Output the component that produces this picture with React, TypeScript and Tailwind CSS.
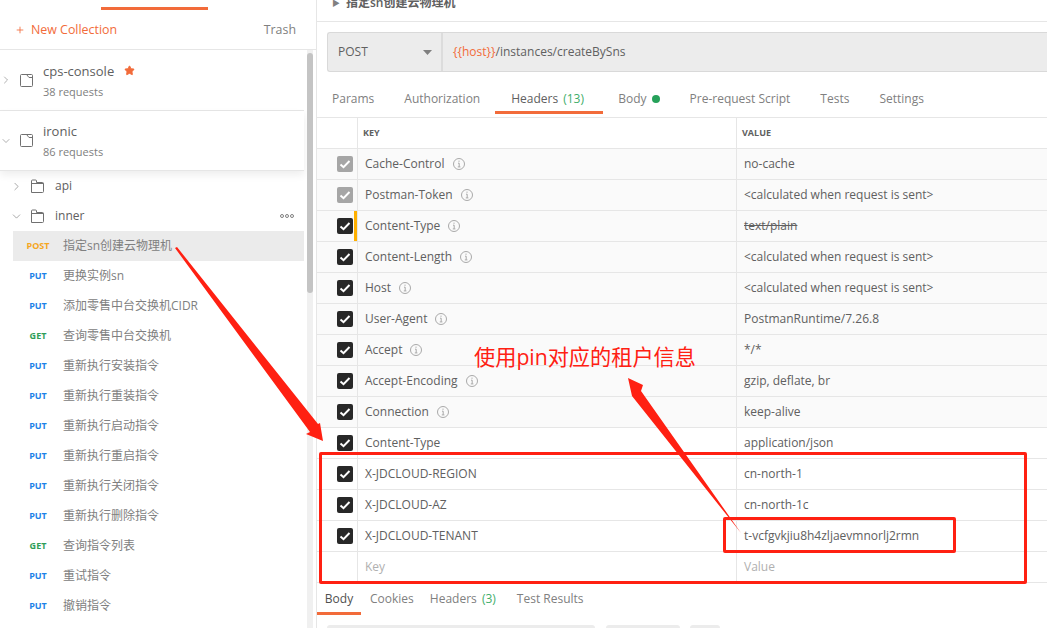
import { ChevronDown, ChevronRight, Plus, Star } from 'lucide-react'

const requests = [
  { method: 'POST', name: '指定sn创建云物理机', active: true },
  { method: 'PUT', name: '更换实例sn' },
  { method: 'PUT', name: '添加零售中台交换机CIDR' },
  { method: 'GET', name: '查询零售中台交换机' },
  { method: 'PUT', name: '重新执行安装指令' },
  { method: 'PUT', name: '重新执行重装指令' },
  { method: 'PUT', name: '重新执行启动指令' },
  { method: 'PUT', name: '重新执行重启指令' },
  { method: 'PUT', name: '重新执行关闭指令' },
  { method: 'PUT', name: '重新执行删除指令' },
  { method: 'GET', name: '查询指令列表' },
  { method: 'PUT', name: '重试指令' },
  { method: 'PUT', name: '撤销指令' },
]

const headers = [
  { key: 'Cache-Control', value: 'no-cache', info: true, auto: true },
  { key: 'Postman-Token', value: '<calculated when request is sent>', info: true, auto: true },
  { key: 'Content-Type', value: 'text/plain', info: true, struck: true, warn: true },
  { key: 'Content-Length', value: '<calculated when request is sent>', info: true },
  { key: 'Host', value: '<calculated when request is sent>', info: true },
  { key: 'User-Agent', value: 'PostmanRuntime/7.26.8', info: true },
  { key: 'Accept', value: '*/*', info: true },
  { key: 'Accept-Encoding', value: 'gzip, deflate, br', info: true },
  { key: 'Connection', value: 'keep-alive', info: true },
  { key: 'Content-Type', value: 'application/json', plain: true },
  { key: 'X-JDCLOUD-REGION', value: 'cn-north-1', plain: true },
  { key: 'X-JDCLOUD-AZ', value: 'cn-north-1c', plain: true },
  { key: 'X-JDCLOUD-TENANT', value: 't-vcfgvkjiu8h4zljaevmnorlj2rmn', plain: true },
]

function CollectionIcon() {
  return (
    <svg width="15" height="15" viewBox="0 0 15 15" fill="none" stroke="#707070" strokeWidth="1" className="shrink-0">
      <path d="M1.5 2.5 Q1.5 1.5 2.5 1.5 H12.5 Q13.5 1.5 13.5 2.5 V12.5 Q13.5 13.5 12.5 13.5 H2.5 Q1.5 13.5 1.5 12.5 Z" />
      <path d="M7.5 1.5 L10 4.5 H13.5" />
    </svg>
  )
}

function FolderIcon() {
  return (
    <svg width="15" height="15" viewBox="0 0 15 15" fill="none" stroke="#707070" strokeWidth="1" className="shrink-0">
      <path d="M1.5 13.5 V2 Q1.5 1 2.5 1 H5.5 Q6.5 1 6.5 2 V3.5 H12.5 Q13.5 3.5 13.5 4.5 V12.5 Q13.5 13.5 12.5 13.5 Z" />
      <path d="M1.5 4.5 H13.5" />
    </svg>
  )
}

function InfoIcon() {
  return (
    <svg width="12" height="12" viewBox="0 0 12 12" fill="none" className="ml-[8px] shrink-0">
      <circle cx="6" cy="6" r="5.5" stroke="#a9a9a9" />
      <path d="M6 2.6 V3.8 M5 5.2 H6.2 V8.8 M4.8 8.9 H7.4" stroke="#a9a9a9" />
    </svg>
  )
}

function CheckBox({ auto }: { auto?: boolean }) {
  return (
    <div className={`flex h-4 w-4 items-center justify-center rounded-[2px] ${auto ? 'bg-[#a6a6a6]' : 'bg-[#282828]'}`}>
      <svg width="12" height="12" viewBox="0 0 12 12" fill="none" stroke="#fff" strokeWidth="2">
        <path d="M1.5 6.5 L4.5 9.2 L10.5 3" />
      </svg>
    </div>
  )
}

function Collection({ name, count, open, starred }: { name: string; count: string; open?: boolean; starred?: boolean }) {
  return (
    <div className={`flex items-center border-b border-[#e6e6e6] ${open ? 'h-[60px] shadow-[0_4px_8px_rgba(0,0,0,0.07)]' : 'h-[61px]'}`}>
      <div className="flex w-[19px] justify-center pr-[7px] text-[#606060]">
        {open ? <ChevronDown size={14} strokeWidth={1} /> : <ChevronRight size={14} strokeWidth={1} />}
      </div>
      <CollectionIcon />
      <div className="ml-[9px] flex flex-col">
        <div className="flex items-center text-[13px] leading-[18px] text-[#606060]">
          {name}
          {starred && <Star size={11} className="ml-[10px] fill-[#f26b3a] text-[#f26b3a]" />}
        </div>
        <div className="mt-[4px] text-[11px] leading-[15px] text-[#808080]">{count}</div>
      </div>
    </div>
  )
}

function Sidebar() {
  return (
    <div className="flex w-[317px] shrink-0 flex-col border-r border-[#e6e6e6]">
      <div className="flex h-[10px] shrink-0 items-end overflow-hidden">
        <span className="ml-[23px] mt-[-17px] w-[78px] self-start text-[12px] leading-[18px] text-[#606060]">History</span>
        <div className="h-[3px] w-[107px] bg-[#f26b3a]" />
      </div>
      <div className="flex h-[40px] shrink-0 items-center justify-between border-b border-[#e6e6e6] pl-[15px] pr-[20px] pt-[1px] text-[12.4px]">
        <div className="flex items-center text-[#f26b3a]">
          <Plus size={10} strokeWidth={2} className="mr-[6px]" />
          New Collection
        </div>
        <span className="text-[#808080]">Trash</span>
      </div>
      <div className="flex min-h-0 flex-1">
        <div className="w-[304px] shrink-0">
          <Collection name="cps-console" count="38 requests" starred />
          <Collection name="ironic" count="86 requests" open />
          <div className="flex h-[30px] items-center pl-[10px] text-[12px] text-[#606060]">
            <ChevronRight size={13} strokeWidth={1} className="mr-[7px] text-[#606060]" />
            <FolderIcon />
            <span className="ml-[10px]">api</span>
          </div>
          <div className="flex h-[30px] items-center pl-[10px] pr-[10px] text-[12px] text-[#606060]">
            <ChevronDown size={13} strokeWidth={1} className="mr-[7px] text-[#606060]" />
            <FolderIcon />
            <span className="ml-[10px]">inner</span>
            <span className="ml-auto flex gap-[1px]">
              <i className="h-[4px] w-[4px] rounded-full border border-[#808080]" />
              <i className="h-[4px] w-[4px] rounded-full border border-[#808080]" />
              <i className="h-[4px] w-[4px] rounded-full border border-[#808080]" />
            </span>
          </div>
          {requests.map((r, i) => (
            <div key={i} className={`ml-[13px] flex h-[30px] items-center ${r.active ? 'bg-[#ebebeb]' : ''}`}>
              <span
                className={`w-[50px] text-center text-[9px] font-bold ${
                  r.method === 'POST' ? 'text-[#f5a623]' : r.method === 'GET' ? 'text-[#2f9e58]' : 'text-[#1c82e8]'
                }`}
              >
                {r.method}
              </span>
              <span className="text-[12px] text-[#808080]">{r.name}</span>
            </div>
          ))}
        </div>
        <div className="ml-[3px] w-[6px] bg-[#f0f0f0] pt-[3px]">
          <div className="h-[240px] rounded-[3px] bg-[#c4c4c4]" />
        </div>
      </div>
    </div>
  )
}

function HeaderRow({ row }: { row: (typeof headers)[number] }) {
  return (
    <div className={`flex h-[31px] shrink-0 border-b border-[#e6e6e6] text-[12px] text-[#606060] ${row.plain ? '' : 'bg-[#fafafa]'}`}>
      <div className="flex w-[41px] shrink-0 items-center justify-between border-r border-[#e6e6e6] pl-[20px]">
        <CheckBox auto={row.auto} />
        {row.warn && <div className="h-full w-[3px] bg-[#ffb000]" />}
      </div>
      <div className="flex w-[379px] shrink-0 items-center border-r border-[#e6e6e6] pl-[7px]">
        {row.key}
        {row.info && <InfoIcon />}
      </div>
      <div className={`flex items-center pl-[7px] ${row.struck ? 'line-through' : ''}`}>{row.value}</div>
    </div>
  )
}

function Main() {
  return (
    <div className="flex min-w-0 flex-1 flex-col">
      <div className="flex h-[22px] shrink-0 items-start overflow-hidden border-b border-[#e6e6e6] pl-[15px]">
        <div className="mt-[-6px] flex items-center text-[12px] font-semibold text-[#606060]">
          <span className="mr-[6px] text-[8px] text-[#808080]">▶</span>
          指定sn创建云物理机
        </div>
      </div>
      <div className="ml-[10px] mt-[10px] flex h-[40px] shrink-0 rounded-l-[3px] border border-r-0 border-[#d9d9d9] bg-[#ececec] text-[12px] text-[#606060]">
        <div className="flex w-[115px] shrink-0 items-center border-r-2 border-[#dcdcdc] pl-[10px]">
          POST
          <svg width="9" height="5" viewBox="0 0 9 5" className="ml-[55px]">
            <path d="M0 0 H9 L4.5 5 Z" fill="#808080" />
          </svg>
        </div>
        <div className="flex items-center pl-[10px]">
          <span className="text-[#f26b3a]">{'{{host}}'}</span>/instances/createBySns
        </div>
      </div>
      <div className="flex h-[46px] shrink-0 items-center border-b border-[#e6e6e6] text-[12px] text-[#808080]">
        <span className="ml-[15px] mt-[8px]">Params</span>
        <span className="ml-[30px] mt-[8px]">Authorization</span>
        <div className="relative ml-[15px] flex h-full w-[108px] items-center pl-[16px] pt-[8px] text-[#606060]">
          Headers <span className="ml-[5px] text-[#3fae6a]">(13)</span>
          <div className="absolute bottom-[3px] left-0 h-[3px] w-full bg-[#f26b3a]" />
        </div>
        <span className="ml-[15px] mt-[8px] flex items-center">
          Body
          <i className="ml-[5px] h-2 w-2 rounded-full bg-[#26a15a]" />
        </span>
        <span className="ml-[30px] mt-[8px]">Pre-request Script</span>
        <span className="ml-[30px] mt-[8px]">Tests</span>
        <span className="ml-[30px] mt-[8px]">Settings</span>
      </div>
      <div className="flex h-[31px] shrink-0 border-b border-[#e6e6e6] text-[9px] font-bold text-[#606060]">
        <div className="w-[41px] border-r border-[#e6e6e6]" />
        <div className="flex w-[379px] items-center border-r border-[#e6e6e6] pl-[5px]">KEY</div>
        <div className="flex items-center pl-[5px]">VALUE</div>
      </div>
      {headers.map((row, i) => (
        <HeaderRow key={i} row={row} />
      ))}
      <div className="flex h-[31px] shrink-0 border-b border-[#e6e6e6] text-[12px] text-[#b0b0b0]">
        <div className="w-[41px] border-r border-[#e6e6e6]" />
        <div className="flex w-[379px] items-center border-r border-[#e6e6e6] pl-[7px]">Key</div>
        <div className="flex items-center pl-[7px]">Value</div>
      </div>
      <div className="flex h-[32px] shrink-0 items-center text-[12px] text-[#808080]">
        <div className="relative flex h-full w-[44px] items-center justify-center text-[#505050]">
          Body
          <div className="absolute bottom-0 left-0 h-[3px] w-full bg-[#f26b3a]" />
        </div>
        <span className="ml-[9px]">Cookies</span>
        <span className="ml-[16px]">
          Headers <span className="ml-[2px] text-[#3fae6a]">(3)</span>
        </span>
        <span className="ml-[21px]">Test Results</span>
      </div>
      <div className="ml-[10px] mt-[10px] flex shrink-0 gap-[10px]">
        <div className="h-[10px] w-[268px] rounded-[3px] bg-[#ececec]" />
        <div className="ml-[1px] h-[10px] w-[74px] rounded-[3px] bg-[#ececec]" />
        <div className="h-[10px] w-[30px] rounded-[3px] bg-[#ececec]" />
      </div>
    </div>
  )
}

function Annotations() {
  return (
    <>
      <svg width="1047" height="628" viewBox="0 0 1047 628" className="pointer-events-none absolute left-0 top-0">
        <polygon fill="#ff2012" points="175,248 177,247 318,424 320,423 323,441 306,434 310,432" />
        <polygon fill="#ff2012" points="741,533 641,391 643,385 628,378 632,396" />
      </svg>
      <div className="pointer-events-none absolute left-[319px] top-[452px] h-[132px] w-[708px] rounded-[2px] border-[3px] border-[#ff2012]" />
      <div className="pointer-events-none absolute left-[723px] top-[517px] h-[36px] w-[233px] rounded-[2px] border-[3px] border-[#ff2012]" />
      <div className="pointer-events-none absolute left-[474px] top-[343px] whitespace-nowrap text-[21.2px] leading-[28px] text-[#ff2012]">
        使用pin对应的租户信息
      </div>
    </>
  )
}

export default function App() {
  return (
    <div className="relative flex h-[628px] w-[1047px] overflow-hidden bg-white font-['Open_Sans','Noto_Sans_CJK_SC',sans-serif]">
      <Sidebar />
      <Main />
      <Annotations />
    </div>
  )
}
